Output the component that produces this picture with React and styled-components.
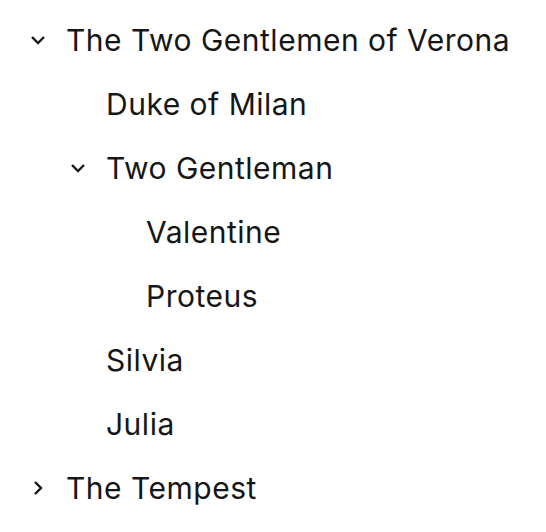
import styled, { createGlobalStyle } from "styled-components";

const GlobalStyle = createGlobalStyle`
  body {
    margin: 0;
    background: #ffffff;
    font-family: Inter, "Noto Sans", sans-serif;
    color: #161616;
  }
`;

const tree = [
  {
    label: "The Two Gentlemen of Verona",
    open: true,
    children: [
      { label: "Duke of Milan" },
      {
        label: "Two Gentleman",
        open: true,
        children: [{ label: "Valentine" }, { label: "Proteus" }],
      },
      { label: "Silvia" },
      { label: "Julia" },
    ],
  },
  { label: "The Tempest", open: false, children: [] },
];

const Chevron = ({ open }) => (
  <svg width="16" height="16" viewBox="0 0 16 16" fill="none">
    {open ? (
      <path d="M2 5 L8 11 L14 5" stroke="#161616" strokeWidth="2.4" />
    ) : (
      <path d="M5 2 L11 8 L5 14" stroke="#161616" strokeWidth="2.4" />
    )}
  </svg>
);

const Node = ({ node, depth }) => {
  const hasChildren = !!node.children;
  return (
    <li>
      <Row depth={depth}>
        <Toggle>{hasChildren && <Chevron open={node.open} />}</Toggle>
        <Label>{node.label}</Label>
      </Row>
      {hasChildren && node.open && (
        <List>
          {node.children.map((c) => (
            <Node key={c.label} node={c} depth={depth + 1} />
          ))}
        </List>
      )}
    </li>
  );
};

const App = () => (
  <>
    <GlobalStyle />
    <Tree>
      <List>
        {tree.map((n) => (
          <Node key={n.label} node={n} depth={0} />
        ))}
      </List>
    </Tree>
  </>
);

const Tree = styled.nav`
  padding: 8px 0;
`;

const List = styled.ul`
  list-style: none;
  margin: 0;
  padding: 0;
`;

const Row = styled.div`
  display: flex;
  align-items: center;
  height: 64px;
  padding-left: ${(p) => 18 + p.depth * 40}px;
`;

const Toggle = styled.span`
  display: flex;
  align-items: center;
  justify-content: center;
  width: 40px;
  height: 40px;
  flex-shrink: 0;
`;

const Label = styled.span`
  margin-left: 8px;
  font-size: 30px;
  line-height: 1;
  letter-spacing: 0.5px;
  white-space: nowrap;
`;

export default App;
